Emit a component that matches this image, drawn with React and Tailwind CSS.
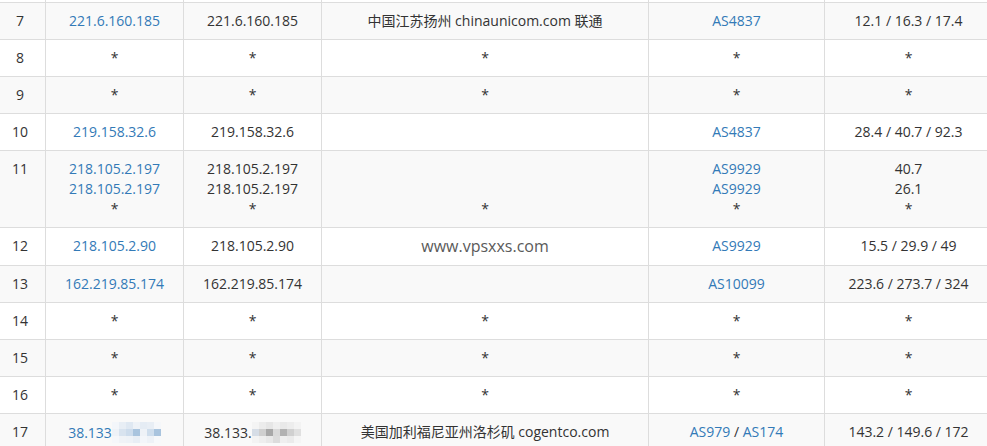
import React from "react";

const cols = "grid grid-cols-[46px_138px_138px_327px_176px_1fr]";

const mosaicBlue = [
  ["bg-[#f3f6fa]", "bg-[#e8eef5]", "bg-[#dfe8f2]", "bg-[#eef2f7]", "bg-[#e5ecf4]", "bg-[#e8eef5]", "bg-[#f5f7fa]"],
  ["bg-[#eef2f7]", "bg-[#d8e3ef]", "bg-[#cddcec]", "bg-[#a9c4de]", "bg-[#eef2f7]", "bg-[#cfdeed]", "bg-[#a9c4de]"],
  ["bg-[#f5f7fa]", "bg-[#f0f3f7]", "bg-[#eef2f7]", "bg-[#e8eef5]", "bg-[#f3f6fa]", "bg-[#eef2f7]", "bg-[#f7f9fb]"],
];

const mosaicGray = [
  ["bg-[#f4f4f4]", "bg-[#ececec]", "bg-[#e6e6e6]", "bg-[#efefef]", "bg-[#e9e9e9]", "bg-[#ededed]", "bg-[#f3f3f3]"],
  ["bg-[#d6dde6]", "bg-[#cfcfcf]", "bg-[#a8a8a8]", "bg-[#d9d9d9]", "bg-[#b2b2b2]", "bg-[#d0d0d0]", "bg-[#e0e0e0]"],
  ["bg-[#f3f3f3]", "bg-[#eeeeee]", "bg-[#e8e8e8]", "bg-[#dcdcdc]", "bg-[#efefef]", "bg-[#ebebeb]", "bg-[#f5f5f5]"],
];

const Mosaic = ({ grid }) => (
  <span className="inline-flex flex-col align-middle">
    {grid.map((row, i) => (
      <span key={i} className="flex">
        {row.map((c, j) => (
          <span key={j} className={`block w-[7px] h-[7px] ${c}`} />
        ))}
      </span>
    ))}
  </span>
);

const Link = ({ children }) => <span className="text-[#337ab7]">{children}</span>;

const Star = () => <span>*</span>;

const rows = [
  {
    hop: "7",
    ip: <Link>221.6.160.185</Link>,
    host: "221.6.160.185",
    loc: "中国江苏扬州 chinaunicom.com 联通",
    as: <Link>AS4837</Link>,
    rtt: "12.1 / 16.3 / 17.4",
  },
  { hop: "8", ip: <Star />, host: <Star />, loc: <Star />, as: <Star />, rtt: <Star /> },
  { hop: "9", ip: <Star />, host: <Star />, loc: <Star />, as: <Star />, rtt: <Star /> },
  {
    hop: "10",
    ip: <Link>219.158.32.6</Link>,
    host: "219.158.32.6",
    loc: "",
    as: <Link>AS4837</Link>,
    rtt: "28.4 / 40.7 / 92.3",
  },
  {
    hop: "11",
    ip: (
      <>
        <div><Link>218.105.2.197</Link></div>
        <div><Link>218.105.2.197</Link></div>
        <div>*</div>
      </>
    ),
    host: (
      <>
        <div>218.105.2.197</div>
        <div>218.105.2.197</div>
        <div>*</div>
      </>
    ),
    loc: (
      <>
        <div className="h-5" />
        <div className="h-5" />
        <div>*</div>
      </>
    ),
    as: (
      <>
        <div><Link>AS9929</Link></div>
        <div><Link>AS9929</Link></div>
        <div>*</div>
      </>
    ),
    rtt: (
      <>
        <div>40.7</div>
        <div>26.1</div>
        <div>*</div>
      </>
    ),
  },
  {
    hop: "12",
    ip: <Link>218.105.2.90</Link>,
    host: "218.105.2.90",
    loc: <span className="text-[16px] text-[#5a5a5a]">www.vpsxxs.com</span>,
    as: <Link>AS9929</Link>,
    rtt: "15.5 / 29.9 / 49",
  },
  {
    hop: "13",
    ip: <Link>162.219.85.174</Link>,
    host: "162.219.85.174",
    loc: "",
    as: <Link>AS10099</Link>,
    rtt: "223.6 / 273.7 / 324",
  },
  { hop: "14", ip: <Star />, host: <Star />, loc: <Star />, as: <Star />, rtt: <Star /> },
  { hop: "15", ip: <Star />, host: <Star />, loc: <Star />, as: <Star />, rtt: <Star /> },
  { hop: "16", ip: <Star />, host: <Star />, loc: <Star />, as: <Star />, rtt: <Star /> },
  {
    hop: "17",
    ip: (
      <span className="inline-flex items-center">
        <Link>38.133</Link>
        <Mosaic grid={mosaicBlue} />
      </span>
    ),
    host: (
      <span className="inline-flex items-center">
        <span>38.133.</span>
        <Mosaic grid={mosaicGray} />
      </span>
    ),
    loc: "美国加利福尼亚州洛杉矶 cogentco.com",
    as: (
      <>
        <Link>AS979</Link> / <Link>AS174</Link>
      </>
    ),
    rtt: "143.2 / 149.6 / 172",
  },
];

const App = () => {
  return (
    <div
      className="w-[987px] h-[446px] overflow-hidden bg-white text-[14px] leading-5 text-[#333]"
      style={{ fontFamily: '"Open Sans", "Noto Sans CJK SC", sans-serif' }}
    >
      <div className="w-[992px]">
        {/* tail of the previous row */}
        <div className={`${cols} h-[2px]`}>
          <div className="border-r border-[#ddd]" />
          <div className="border-r border-[#ddd]" />
          <div className="border-r border-[#ddd]" />
          <div className="border-r border-[#ddd]" />
          <div className="border-r border-[#ddd]" />
          <div />
        </div>

        {rows.map((r, i) => (
          <div
            key={r.hop}
            className={`${cols} border-t border-[#ddd] ${i % 2 === 0 ? "bg-[#f9f9f9]" : "bg-white"}`}
          >
            <div className="border-r border-[#ddd] py-2 pr-[5px] text-center">{r.hop}</div>
            <div className="border-r border-[#ddd] py-2 text-center">{r.ip}</div>
            <div className="border-r border-[#ddd] py-2 text-center">{r.host}</div>
            <div className="border-r border-[#ddd] py-2 text-center min-h-9">{r.loc}</div>
            <div className="border-r border-[#ddd] py-2 text-center">{r.as}</div>
            <div className="py-2 text-center">{r.rtt}</div>
          </div>
        ))}
      </div>
    </div>
  );
};

export default App;
